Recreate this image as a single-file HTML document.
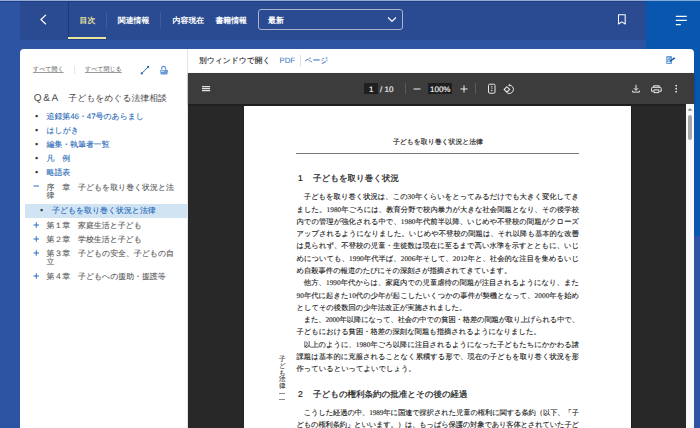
<!DOCTYPE html>
<html lang="ja">
<head>
<meta charset="utf-8">
<style>
*{box-sizing:border-box;margin:0;padding:0}
html,body{width:700px;height:428px;overflow:hidden}
body{text-rendering:geometricPrecision;background:#2d53a3;font-family:"Liberation Sans",sans-serif;position:relative}
.abs{position:absolute}
#topline{left:0;top:0;width:700px;height:1px;background:rgba(255,255,255,.5)}
#topline2{left:0;top:1px;width:700px;height:1px;background:#1c3d8c}
#hdr{left:20px;top:1px;width:626px;height:38.5px;background:#2a4b91;border-bottom-left-radius:4px}
#backdiv{left:67.5px;top:1px;width:1px;height:38px;background:#1e3a78}
#rstrip{left:646px;top:0;width:54px;height:236px;background:#0956ae}
.tab{top:15px;font-size:7.9px;line-height:11px;color:#fff;white-space:nowrap;font-weight:bold}
.tsep{top:12px;width:1px;height:17px;background:#3d5c9e}
#uline{left:68px;top:37px;width:38px;height:2px;background:#ebe59c;box-shadow:0 0.8px 0 #1d3f8e}
#sel{left:258px;top:8.6px;width:145px;height:21.8px;border:1px solid #a9b4cc;border-radius:3px}
#panel{left:20px;top:49px;width:674px;height:400px;background:#fff;border-radius:4px 4px 0 0}
#lsep{left:187px;top:49px;width:1px;height:379px;background:#e3e3e3}
#pdf{left:188px;top:73px;width:506px;height:355px;background:#282828}
#tb{left:188px;top:73px;width:506px;height:31px;background:#3c3c3c;box-shadow:0 1px 2px rgba(0,0,0,.35)}
#page{left:243.5px;top:106px;width:387.5px;height:330px;background:#fff;box-shadow:0 0 1.5px 0.5px rgba(0,0,0,.6)}
#sb{left:686px;top:104px;width:8px;height:324px;background:#f8f8f8}
#thumb{left:688px;top:114.7px;width:4.2px;height:25.3px;background:#a8a8a8;border-radius:2.1px}
.small{font-size:6px;line-height:8px;color:#7a7a7a;text-decoration:underline;text-decoration-color:#9a9a9a;white-space:nowrap;-webkit-text-stroke:0.1px #7a7a7a}
.nav{font-size:7.9px;line-height:8.4px;white-space:nowrap;color:#1f68b8;-webkit-text-stroke:0.1px currentColor;margin-top:0.6px}
.bul{font-size:9px;line-height:9px;color:#333}
.gray{color:#595959}
.pm{color:#1b62ad;font-size:10px;margin-left:0.8px}
.doc{font-family:"Liberation Serif",serif;color:#222;white-space:nowrap}
.body{font-size:7.45px;line-height:12.5px}

.body{left:296.5px;width:282.5px;font-size:7.3px;line-height:12px;text-align:left;-webkit-text-stroke:0.12px #222;margin-top:-0.4px}
.j{text-align:left}
.ttl{line-height:11px;color:#484848;white-space:nowrap}
.hd{font-family:"Liberation Sans",sans-serif;font-size:8.5px;line-height:11px;color:#222;-webkit-text-stroke:0.22px #222}
.tbt{font-size:8px;line-height:10px;color:#f4f4f4;white-space:nowrap;margin-top:0.5px;-webkit-text-stroke:0.15px #f4f4f4}
</style>
</head>
<body>
<div class="abs" id="hdr"></div>
<div class="abs" id="topline2"></div>
<div class="abs" id="backdiv"></div>
<div class="abs" id="rstrip"></div>
<div class="abs" id="topline"></div>
<!-- back chevron -->
<svg class="abs" style="left:38px;top:13px" width="12" height="14" viewBox="0 0 12 14"><path d="M7.9 1.9 L3 6.6 L7.9 11.3" fill="none" stroke="#fff" stroke-width="1.3"/></svg>
<div class="abs tab" style="left:79.6px;color:#e9e29c">目次</div>
<div class="abs tsep" style="left:106px"></div>
<div class="abs tab" style="left:117.8px">関連情報</div>
<div class="abs tsep" style="left:160px"></div>
<div class="abs tab" style="left:172.6px">内容現在</div>
<div class="abs tab" style="left:215.4px">書籍情報</div>
<div class="abs" id="uline"></div>
<div class="abs" id="sel"></div>
<div class="abs tab" style="left:268px;font-weight:bold">最新</div>
<svg class="abs" style="left:386px;top:15px" width="12" height="9" viewBox="0 0 12 9"><path d="M2 2.5 L6 6.3 L10 2.5" fill="none" stroke="#f4f4f4" stroke-width="1.2"/></svg>
<!-- bookmark -->
<svg class="abs" style="left:616px;top:13px" width="12" height="13" viewBox="0 0 12 13"><path d="M2.5 1.8 H9.2 V11 L5.85 8.9 L2.5 11 Z" fill="none" stroke="#fff" stroke-width="1.05" stroke-linejoin="round"/></svg>
<!-- hamburger -->
<svg class="abs" style="left:674px;top:14px" width="16" height="14" viewBox="0 0 16 14"><path d="M1.8 2.4 H12.8 M1.8 6.4 H12.8 M1.8 10.6 H6.8" fill="none" stroke="#fff" stroke-width="1.15"/></svg>

<div class="abs" id="panel"></div>
<div class="abs" id="lsep"></div>

<!-- left panel -->
<div class="abs small" style="left:33px;top:66.2px">すべて開く</div>
<div class="abs" style="left:74px;top:65.5px;width:1px;height:8px;background:#e8e8e8"></div>
<div class="abs small" style="left:85px;top:66.2px">すべて閉じる</div>
<svg class="abs" style="left:139px;top:64px" width="12" height="12" viewBox="0 0 12 12"><path d="M3 9.2 L9 3" fill="none" stroke="#1e64b4" stroke-width="0.9"/><circle cx="2.8" cy="9.4" r="1.1" fill="#1e64b4"/><circle cx="9.2" cy="2.8" r="1.1" fill="#1e64b4"/></svg>
<svg class="abs" style="left:158px;top:64px" width="12" height="12" viewBox="0 0 12 12"><path d="M3.7 5.8 V4.4 A1.9 2 0 0 1 7.5 4.4 L8.1 5.8" fill="none" stroke="#5d90d0" stroke-width="1.1"/><path d="M2.4 5.9 H9.6 A0.6 0.6 0 0 1 10.1 6.6 L9.4 10 A0.8 0.8 0 0 1 8.6 10.6 H3.4 A0.8 0.8 0 0 1 2.6 10 L1.9 6.6 A0.6 0.6 0 0 1 2.4 5.9 Z" fill="#6a9ad4"/><path d="M2.5 7.2 H6.3" stroke="#fff" stroke-width="0.8"/></svg>
<div class="abs ttl" style="left:33.7px;top:93px;font-size:10px">Q</div>
<div class="abs ttl" style="left:43.2px;top:93px;font-size:10px">&amp;</div>
<div class="abs ttl" style="left:51.6px;top:93px;font-size:10px">A</div>
<div class="abs ttl" style="left:68.3px;top:93px;font-size:8.85px">子どもをめぐる法律相談</div>

<div class="abs bul" style="left:35px;top:112px">•</div>
<div class="abs nav" style="left:46.5px;top:112px">追録第46・47号のあらまし</div>
<div class="abs bul" style="left:35px;top:126px">•</div>
<div class="abs nav" style="left:46.5px;top:126px">はしがき</div>
<div class="abs bul" style="left:35px;top:140px">•</div>
<div class="abs nav" style="left:46.5px;top:140px">編集・執筆者一覧</div>
<div class="abs bul" style="left:35px;top:154px">•</div>
<div class="abs nav" style="left:46.5px;top:154px">凡　例</div>
<div class="abs bul" style="left:35px;top:168px">•</div>
<div class="abs nav" style="left:46.5px;top:168px">略語表</div>
<svg class="abs" style="left:32.5px;top:183.4px" width="7" height="6" viewBox="0 0 7 6"><path d="M0.5 3 H6" stroke="#2a6fbd" stroke-width="1"/></svg>
<div class="abs nav gray" style="left:46.5px;top:183px">序　章　子どもを取り巻く状況と法</div>
<div class="abs nav gray" style="left:46.5px;top:191.5px">律</div>
<div class="abs" style="left:25px;top:203.5px;width:162px;height:14px;background:#d1e4f4"></div>
<div class="abs bul" style="left:40px;top:206px">•</div>
<div class="abs nav" style="left:52px;top:206px">子どもを取り巻く状況と法律</div>
<svg class="abs" style="left:32.5px;top:222.0px" width="7" height="6" viewBox="0 0 7 6"><path d="M0.5 3 H6 M3.25 0.25 V5.75" stroke="#2a6fbd" stroke-width="1"/></svg>
<div class="abs nav gray" style="left:46.5px;top:221px">第１章　家庭生活と子ども</div>
<svg class="abs" style="left:32.5px;top:236.1px" width="7" height="6" viewBox="0 0 7 6"><path d="M0.5 3 H6 M3.25 0.25 V5.75" stroke="#2a6fbd" stroke-width="1"/></svg>
<div class="abs nav gray" style="left:46.5px;top:235px">第２章　学校生活と子ども</div>
<svg class="abs" style="left:32.5px;top:250.2px" width="7" height="6" viewBox="0 0 7 6"><path d="M0.5 3 H6 M3.25 0.25 V5.75" stroke="#2a6fbd" stroke-width="1"/></svg>
<div class="abs nav gray" style="left:46.5px;top:249px">第３章　子どもの安全、子どもの自</div>
<div class="abs nav gray" style="left:46.5px;top:257.5px">立</div>
<svg class="abs" style="left:32.5px;top:273.0px" width="7" height="6" viewBox="0 0 7 6"><path d="M0.5 3 H6 M3.25 0.25 V5.75" stroke="#2a6fbd" stroke-width="1"/></svg>
<div class="abs nav gray" style="left:46.5px;top:272px">第４章　子どもへの援助・援護等</div>

<!-- right header bar -->
<div class="abs" style="left:199px;top:55.5px;font-size:7.8px;line-height:10px;color:#262626;white-space:nowrap;-webkit-text-stroke:0.15px #262626">別ウィンドウで開く</div>
<div class="abs" style="left:279.5px;top:55.5px;font-size:7.7px;line-height:10px;color:#2a6fbd;white-space:nowrap">PDF</div>
<div class="abs" style="left:299.5px;top:55px;width:1px;height:11px;background:#ddd"></div>
<div class="abs" style="left:304.5px;top:55.5px;font-size:7.8px;line-height:10px;color:#2a6fbd;white-space:nowrap;-webkit-text-stroke:0.1px #2a6fbd">ページ</div>
<svg class="abs" style="left:664px;top:54px" width="13" height="12" viewBox="0 0 13 12"><rect x="2.2" y="2.1" width="5.8" height="7.9" rx="0.8" fill="#6c9fd8"/><path d="M3.3 4.2 H5.5 M3.3 8.4 H6.5" stroke="#fff" stroke-width="0.8"/><path d="M3.6 6.2 L4.8 7.2 L6.8 5.4" stroke="#fff" stroke-width="0.8" fill="none"/><path d="M6 7.2 L10.8 3.8" stroke="#1557a8" stroke-width="1.5"/></svg>

<!-- pdf viewer -->
<div class="abs" id="pdf"></div>
<div class="abs" id="tb"></div>
<div class="abs" id="page"></div>
<div class="abs" id="sb"></div>
<div class="abs" id="thumb"></div>

<!-- toolbar icons -->
<svg class="abs" style="left:200px;top:83px" width="12" height="12" viewBox="0 0 12 12"><path d="M2 3.6 H10.1 M2 5.6 H10.1 M2 7.6 H10.1" stroke="#e0e0e0" stroke-width="1.15"/></svg>
<div class="abs" style="left:364px;top:83px;width:13.5px;height:11px;background:#1f1f1f"></div>
<div class="abs tbt" style="left:369px;top:84px">1</div>
<div class="abs tbt" style="left:380px;top:84px">/ 10</div>
<div class="abs" style="left:404.5px;top:83px;width:1px;height:11px;background:#5a5a5a"></div>
<svg class="abs" style="left:412px;top:84px" width="10" height="10" viewBox="0 0 10 10"><path d="M1.5 5 H8.5" stroke="#f1f1f1" stroke-width="1"/></svg>
<div class="abs" style="left:428px;top:83px;width:24px;height:11px;background:#1f1f1f"></div>
<div class="abs tbt" style="left:430px;top:84px">100%</div>
<svg class="abs" style="left:459px;top:84px" width="10" height="10" viewBox="0 0 10 10"><path d="M1.5 5 H8.5 M5 1.5 V8.5" stroke="#f1f1f1" stroke-width="1"/></svg>
<div class="abs" style="left:475px;top:83px;width:1px;height:11px;background:#5a5a5a"></div>
<svg class="abs" style="left:487px;top:83px" width="10" height="11" viewBox="0 0 10 11"><rect x="1.5" y="1.2" width="6.5" height="9" rx="1.2" fill="none" stroke="#e8e8e8" stroke-width="1"/><path d="M3.6 4.3 L4.75 3 L5.9 4.3 Z M3.6 7 L4.75 8.3 L5.9 7 Z" fill="#e8e8e8"/><path d="M3.8 5.65 H5.7" stroke="#bdbdbd" stroke-width="0.6"/></svg>
<svg class="abs" style="left:503px;top:83px" width="13" height="12" viewBox="0 0 13 12"><path d="M6.6 2.3 A4.1 4.1 0 1 1 4.2 9.9" fill="none" stroke="#e8e8e8" stroke-width="1"/><circle cx="6.5" cy="2.3" r="1" fill="#e8e8e8"/><path d="M1.2 6.4 L3.9 3.7 L6.6 6.4 L3.9 9.1 Z" fill="none" stroke="#e8e8e8" stroke-width="1.1"/></svg>
<svg class="abs" style="left:630px;top:83px" width="12" height="11" viewBox="0 0 12 11"><path d="M6 1.8 V7.2 M3.9 5.2 L6 7.3 L8.1 5.2 M2.6 7.6 V9.1 H9.4 V7.6" fill="none" stroke="#ececec" stroke-width="1"/></svg>
<svg class="abs" style="left:650px;top:84px" width="13" height="10" viewBox="0 0 13 10"><path d="M3.6 3.3 V1.8 H9.2 V3.3" fill="none" stroke="#ececec" stroke-width="1"/><path d="M2.6 3.3 H10.2 A1 1 0 0 1 11.2 4.3 V7.3 H9.6 M3.2 7.3 H1.6 V4.3 A1 1 0 0 1 2.6 3.3" fill="none" stroke="#ececec" stroke-width="1"/><path d="M3.9 5.9 H8.9 V8.6 H3.9 Z" fill="none" stroke="#ececec" stroke-width="1"/></svg>
<svg class="abs" style="left:674px;top:84px" width="5" height="10" viewBox="0 0 5 10"><circle cx="2.2" cy="1.7" r="0.85" fill="#ececec"/><circle cx="2.2" cy="4.7" r="0.85" fill="#ececec"/><circle cx="2.2" cy="7.7" r="0.85" fill="#ececec"/></svg>
<svg class="abs" style="left:686px;top:105px" width="8" height="8" viewBox="0 0 8 8"><path d="M1.6 5.6 L4 3.4 L6.4 5.6 Z" fill="#6e6e6e"/></svg>

<!-- doc -->
<div class="abs doc" style="left:393px;top:137.5px;font-size:6.85px;line-height:10px;color:#333;-webkit-text-stroke:0.2px #333">子どもを取り巻く状況と法律</div>
<div class="abs" style="left:296px;top:153px;width:283px;height:1px;background:#777"></div>
<div class="abs doc hd" style="left:298px;top:172.5px">1</div><div class="abs doc hd" style="left:313px;top:172.5px">子どもを取り巻く状況</div>
<div class="abs doc body j" style="top:191.8px;letter-spacing:0.020px">　子どもを取り巻く状況は、この30年くらいをとってみるだけでも大きく変化してき</div>
<div class="abs doc body j" style="top:204.1px;letter-spacing:0.063px">ました。1980年ごろには、教育分野で校内暴力が大きな社会問題となり、その後学校</div>
<div class="abs doc body j" style="top:216.3px;letter-spacing:0.063px">内での管理が強化される中で、1980年代前半以降、いじめや不登校の問題がクローズ</div>
<div class="abs doc body j" style="top:228.6px;letter-spacing:0.030px">アップされるようになりました。いじめや不登校の問題は、それ以降も基本的な改善</div>
<div class="abs doc body j" style="top:240.8px;letter-spacing:0.053px">は見られず、不登校の児童・生徒数は現在に至るまで高い水準を示すとともに、いじ</div>
<div class="abs doc body j" style="top:253.1px;letter-spacing:0.053px">めについても、1990年代半ば、2006年そして、2012年と、社会的な注目を集めるいじ</div>
<div class="abs doc body" style="top:265.4px">め自殺事件の報道のたびにその深刻さが指摘されてきています。</div>
<div class="abs doc body j" style="top:277.6px;letter-spacing:0.059px">　他方、1990年代からは、家庭内での児童虐待の問題が注目されるようになり、また</div>
<div class="abs doc body j" style="top:289.9px;letter-spacing:0.044px">90年代に起きた10代の少年が起こしたいくつかの事件が契機となって、2000年を始め</div>
<div class="abs doc body" style="top:302.1px">としてその後数回の少年法改正が実施されました。</div>
<div class="abs doc body j" style="top:314.4px;letter-spacing:-0.125px">　また、2000年以降になって、社会の中での貧困・格差の問題が取り上げられる中で、</div>
<div class="abs doc body" style="top:326.7px">子どもにおける貧困・格差の深刻な問題も指摘されるようになりました。</div>
<div class="abs doc body j" style="top:338.9px;letter-spacing:0.024px">　以上のように、1980年ごろ以降に注目されるようになった子どもたちにかかわる諸</div>
<div class="abs doc body j" style="top:351.2px;letter-spacing:0.053px">課題は基本的に克服されることなく累積する形で、現在の子どもを取り巻く状況を形</div>
<div class="abs doc body" style="top:363.4px">作っているといってよいでしょう。</div>
<div class="abs doc hd" style="left:298px;top:389px">2</div><div class="abs doc hd" style="left:313px;top:389px">子どもの権利条約の批准とその後の経過</div>
<div class="abs doc body j" style="top:407.5px;letter-spacing:-0.112px">　こうした経過の中、1989年に国連で採択された児童の権利に関する条約（以下、「子</div>
<div class="abs doc body j" style="top:419px;letter-spacing:-0.163px">どもの権利条約」といいます。）は、もっぱら保護の対象であり客体とされていた子ど</div>
<div class="abs doc" style="left:279px;top:357px;font-size:6.5px;line-height:6.75px;width:7px;white-space:normal;color:#333;-webkit-text-stroke:0.1px #333">子<br>ど<br>も<br>法<br>律</div>
<div class="abs" style="left:278.7px;top:392.6px;width:5.9px;height:0.8px;background:#8a8a8a"></div>
<div class="abs" style="left:278.7px;top:398.9px;width:5.9px;height:0.8px;background:#8a8a8a"></div>
</body>
</html>
